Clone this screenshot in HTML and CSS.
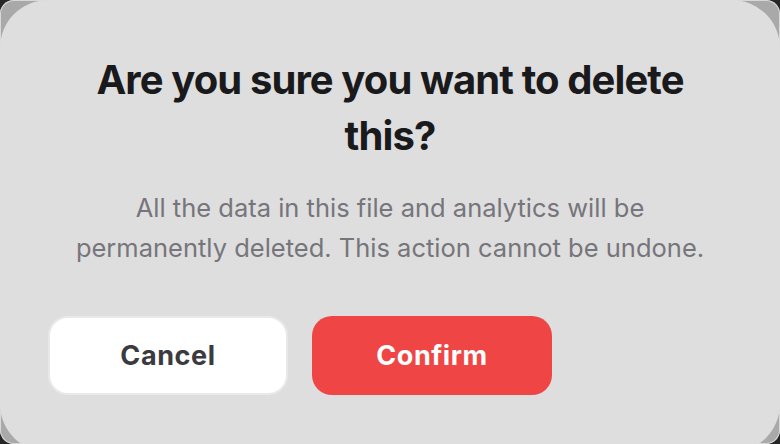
FILE: index.html
```html
<!DOCTYPE html>
<html lang="en">
<head>
<meta charset="utf-8">
<title>Delete confirmation</title>
<link rel="stylesheet" href="styles.css">
</head>
<body>
<div class="frame">
  <div class="card">
    <h1 class="title">Are you sure you want to delete this?</h1>
    <p class="desc">All the data in this file and analytics will be permanently deleted. This action cannot be undone.</p>
    <div class="actions">
      <button class="btn btn-cancel" type="button">Cancel</button>
      <button class="btn btn-confirm" type="button">Confirm</button>
    </div>
  </div>
</div>
</body>
</html>
```
FILE: styles.css
```css
html, body {
  margin: 0;
  padding: 0;
  background: #262626;
  width: 780px;
  height: 444px;
  overflow: hidden;
}
.frame {
  box-sizing: border-box;
  width: 780px;
  height: 444px;
  background: #a9a9a9;
  border-radius: 14px;
  box-shadow: inset 0 0 0 1px #d8d8d8;
  overflow: hidden;
}
.card {
  box-sizing: border-box;
  width: 780px;
  height: 452px;
  background: #dedede;
  border-radius: 48px;
  padding: 52px 48px 0;
  font-family: Inter, "Liberation Sans", sans-serif;
  text-align: center;
}
.title {
  margin: 0 auto;
  max-width: 640px;
  font-size: 40px;
  line-height: 56px;
  font-weight: 700;
  letter-spacing: -0.9px;
  color: #1a1a1c;
}
.desc {
  margin: 24px auto 0;
  max-width: 640px;
  font-size: 25.5px;
  line-height: 40px;
  font-weight: 400;
  letter-spacing: 0;
  color: #76757b;
}
.actions {
  display: flex;
  gap: 24px;
  margin-top: 48px;
}
.btn {
  box-sizing: border-box;
  width: 240px;
  height: 79px;
  border-radius: 20px;
  font-family: Inter, "Liberation Sans", sans-serif;
  font-size: 27px;
  font-weight: 700;
  letter-spacing: 0.6px;
  cursor: pointer;
}
.btn-cancel {
  background: #ffffff;
  border: 2px solid #e9e9e9;
  color: #3a3a3f;
}
.btn-confirm {
  background: #ef4545;
  border: none;
  color: #ffffff;
}
```
